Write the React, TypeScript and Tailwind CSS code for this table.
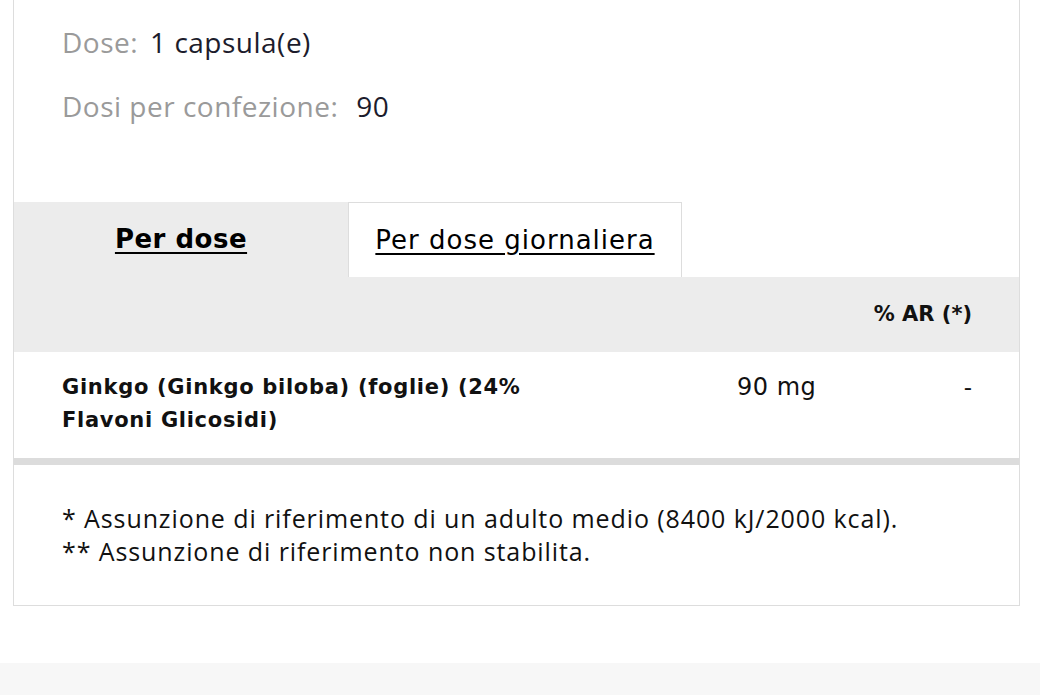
export default function App() {
  return (
    <div className="min-h-[695px] bg-white">
      <div className="ml-[13px] w-[1007px] border-x border-b border-[#dddddd]">
        {/* Dose info */}
        <div className="h-[202px] px-[48px] pt-[23px] font-['Open_Sans',sans-serif] text-[28px] tracking-[0.5px]">
          <p className="h-[38px] leading-[38px]">
            <span className="text-[#9a9a9a]">Dose:</span>
            <span className="ml-3 text-[#1c1c2c]">1 capsula(e)</span>
          </p>
          <p className="mt-[26px] h-[38px] leading-[38px]">
            <span className="text-[#9a9a9a]">Dosi per confezione:</span>
            <span className="ml-[18px] text-[#1c1c2c]">90</span>
          </p>
        </div>

        {/* Tabs */}
        <div className="flex h-[75px] font-['DejaVu_Sans',sans-serif] text-[26px] text-black">
          <div className="flex w-[334px] items-center justify-center bg-[#ececec]">
            <span className="font-bold tracking-[0.5px] underline underline-offset-4">Per dose</span>
          </div>
          <div className="flex w-[334px] items-center justify-center border-x border-t border-[#dddddd] bg-white">
            <span className="tracking-[1px] underline underline-offset-4">Per dose giornaliera</span>
          </div>
        </div>

        {/* Table */}
        <div className="font-['DejaVu_Sans',sans-serif] text-[#111]">
          <div className="flex h-[75px] items-center justify-end bg-[#ececec] pr-[47px] text-[21px] font-bold">
            % AR (*)
          </div>
          <div className="flex h-[106px] pt-[19px] pl-[48px] pr-[47px]">
            <div className="w-[520px] text-[21px] font-bold leading-[33px] tracking-[0.7px]">
              Ginkgo (Ginkgo biloba) (foglie) (24% Flavoni Glicosidi)
            </div>
            <div className="ml-[155px] text-[24px] leading-[33px] tracking-[0.5px]">90 mg</div>
            <div className="ml-auto text-[23px] leading-[33px]">-</div>
          </div>
          <div className="h-[7px] bg-[#dcdcdc]" />
        </div>

        {/* Footnotes */}
        <div className="h-[140px] px-[48px] pt-[37px] font-['Open_Sans',sans-serif] text-[25px] leading-[33px] tracking-[0.9px] text-[#111]">
          <p>* Assunzione di riferimento di un adulto medio (8400 kJ/2000 kcal).</p>
          <p>** Assunzione di riferimento non stabilita.</p>
        </div>
      </div>
      <div className="h-[57px]" />
      <div className="h-[33px] bg-[#f7f7f7]" />
    </div>
  )
}
